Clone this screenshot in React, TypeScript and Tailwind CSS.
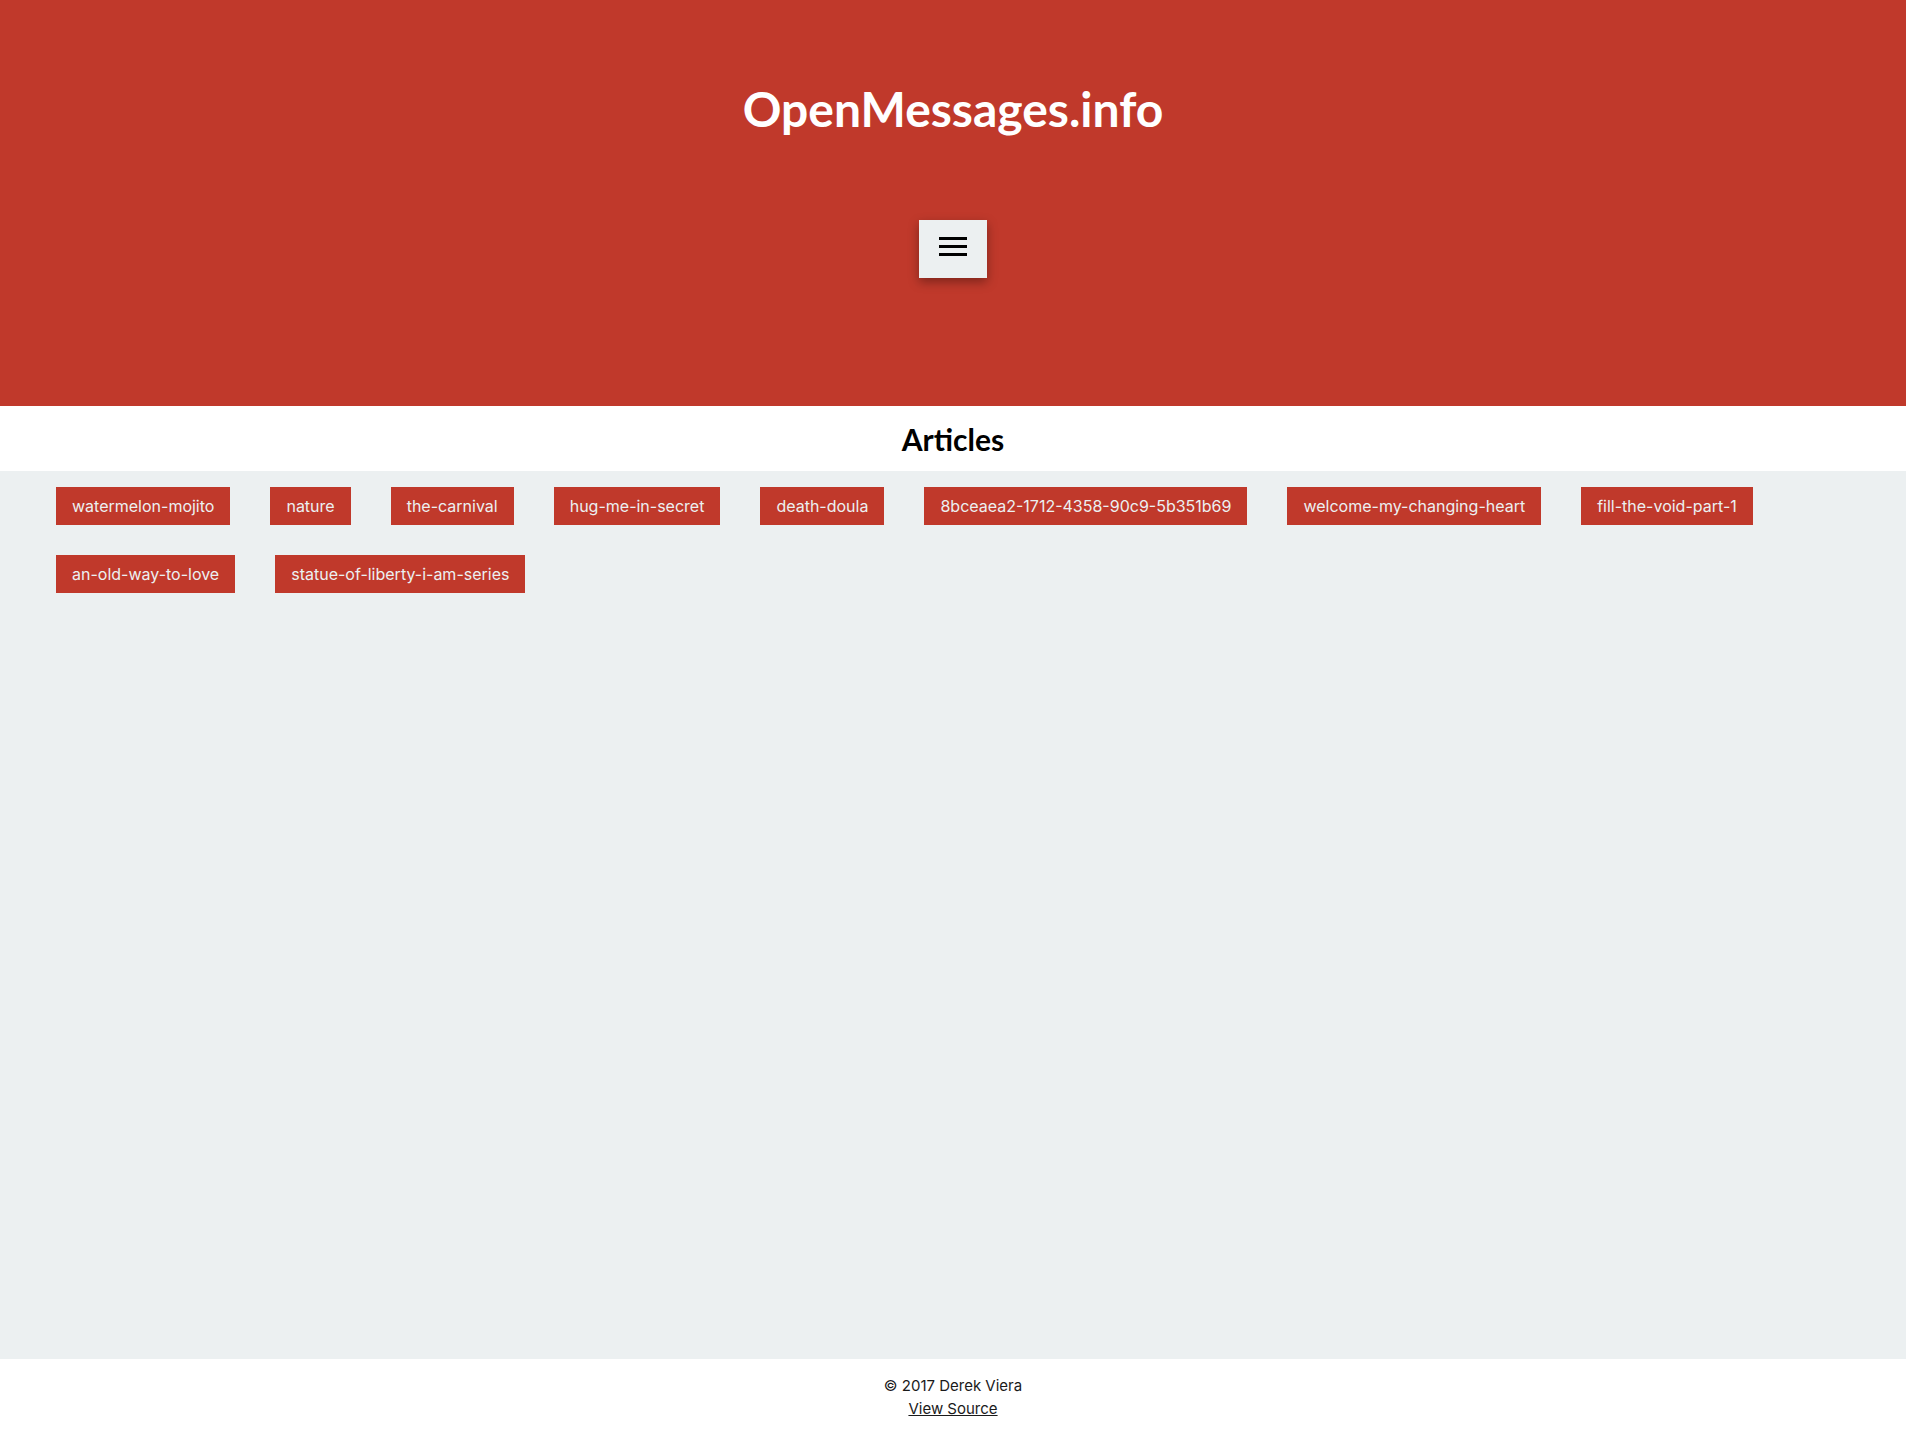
import React from 'react';

const articles = [
  'watermelon-mojito',
  'nature',
  'the-carnival',
  'hug-me-in-secret',
  'death-doula',
  '8bceaea2-1712-4358-90c9-5b351b69',
  'welcome-my-changing-heart',
  'fill-the-void-part-1',
  'an-old-way-to-love',
  'statue-of-liberty-i-am-series',
];

const App: React.FC = () => {
  return (
    <div className="min-h-screen flex flex-col bg-[#ecf0f1] font-['Inter',sans-serif]">
      {/* Header */}
      <header className="h-[406px] bg-[#c0392b] flex flex-col items-center">
        <h1 className="mt-[80px] text-[48px] leading-[58px] font-bold text-white font-['Lato',sans-serif]">
          OpenMessages.info
        </h1>
        <button
          type="button"
          className="mt-[82px] w-[68px] h-[58px] bg-[#ecf0f1] flex items-start justify-center pt-[17px] shadow-[0_4px_10px_rgba(0,0,0,0.35)]"
        >
          <svg width="28" height="19" viewBox="0 0 28 19">
            <rect x="0" y="0" width="28" height="3" fill="#000" />
            <rect x="0" y="8" width="28" height="3" fill="#000" />
            <rect x="0" y="16" width="28" height="3" fill="#000" />
          </svg>
        </button>
      </header>

      {/* Articles */}
      <div className="h-[65px] bg-white flex items-center justify-center">
        <h2 className="text-[30px] font-bold text-black font-['Lato',sans-serif] leading-none">Articles</h2>
      </div>

      <main className="flex-1">
        <div className="px-[56px] pt-[16px] flex flex-wrap gap-x-[40px] gap-y-[30px]">
          {articles.map((a) => (
            <a
              key={a}
              href="#"
              className="bg-[#c0392b] text-[#ecf0f1] text-[16px] leading-[20px] px-[16px] py-[9px]"
            >
              {a}
            </a>
          ))}
        </div>
      </main>

      {/* Footer */}
      <footer className="h-[80px] bg-white flex flex-col items-center pt-[15px] text-[15px] leading-[23px] text-[#1a1a1a]">
        <span>© 2017 Derek Viera</span>
        <a href="#" className="underline">View Source</a>
      </footer>
    </div>
  );
};

export default App;
